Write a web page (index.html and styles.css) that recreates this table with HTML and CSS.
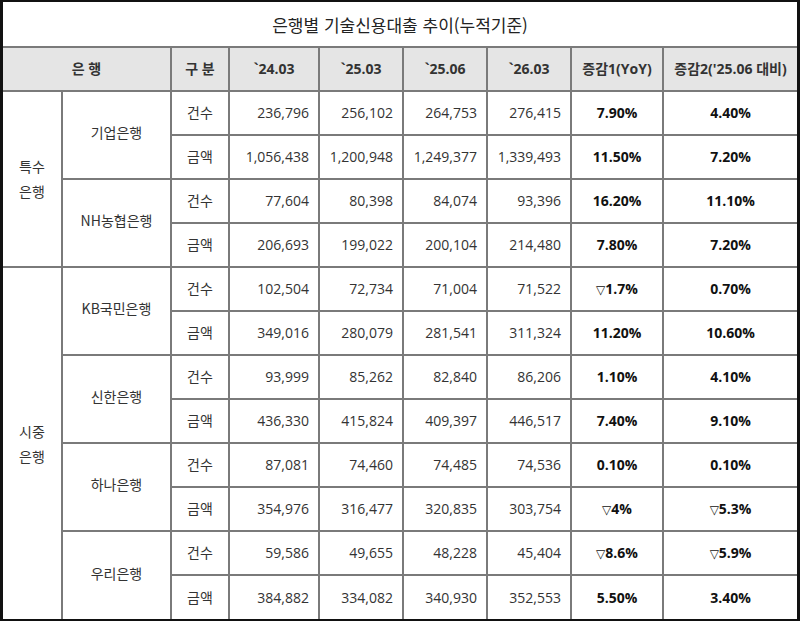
FILE: index.html
```html
<!DOCTYPE html>
<html lang="ko">
<head>
<meta charset="utf-8">
<link rel="stylesheet" href="styles.css">
</head>
<body>
<div class="frame">
<table class="grid">
  <colgroup>
    <col class="c-grp"><col class="c-bank"><col class="c-kind">
    <col class="c-n1"><col class="c-n2"><col class="c-n3"><col class="c-n4">
    <col class="c-p1"><col class="c-p2">
  </colgroup>
  <tr class="title-row"><td colspan="9" class="title">은행별 기술신용대출 추이(누적기준)</td></tr>
  <tr class="head-row">
    <th colspan="2">은 행</th><th>구 분</th><th>`24.03</th><th>`25.03</th><th>`25.06</th><th>`26.03</th><th>증감1(YoY)</th><th>증감2('25.06 대비)</th>
  </tr>
  <tr>
    <td rowspan="4" class="grp"><div class="grp-line">특수</div><div class="grp-line">은행</div></td>
    <td rowspan="2" class="bank">기업은행</td>
    <td class="kind">건수</td><td class="num">236,796</td><td class="num">256,102</td><td class="num">264,753</td><td class="num">276,415</td><td class="pct">7.90%</td><td class="pct">4.40%</td>
  </tr>
  <tr>
    <td class="kind">금액</td><td class="num">1,056,438</td><td class="num">1,200,948</td><td class="num">1,249,377</td><td class="num">1,339,493</td><td class="pct">11.50%</td><td class="pct">7.20%</td>
  </tr>
  <tr>
    <td rowspan="2" class="bank">NH농협은행</td>
    <td class="kind">건수</td><td class="num">77,604</td><td class="num">80,398</td><td class="num">84,074</td><td class="num">93,396</td><td class="pct">16.20%</td><td class="pct">11.10%</td>
  </tr>
  <tr>
    <td class="kind">금액</td><td class="num">206,693</td><td class="num">199,022</td><td class="num">200,104</td><td class="num">214,480</td><td class="pct">7.80%</td><td class="pct">7.20%</td>
  </tr>
  <tr>
    <td rowspan="8" class="grp"><div class="grp-line">시중</div><div class="grp-line">은행</div></td>
    <td rowspan="2" class="bank">KB국민은행</td>
    <td class="kind">건수</td><td class="num">102,504</td><td class="num">72,734</td><td class="num">71,004</td><td class="num">71,522</td><td class="pct"><span class="tri">▽</span>1.7%</td><td class="pct">0.70%</td>
  </tr>
  <tr>
    <td class="kind">금액</td><td class="num">349,016</td><td class="num">280,079</td><td class="num">281,541</td><td class="num">311,324</td><td class="pct">11.20%</td><td class="pct">10.60%</td>
  </tr>
  <tr>
    <td rowspan="2" class="bank">신한은행</td>
    <td class="kind">건수</td><td class="num">93,999</td><td class="num">85,262</td><td class="num">82,840</td><td class="num">86,206</td><td class="pct">1.10%</td><td class="pct">4.10%</td>
  </tr>
  <tr>
    <td class="kind">금액</td><td class="num">436,330</td><td class="num">415,824</td><td class="num">409,397</td><td class="num">446,517</td><td class="pct">7.40%</td><td class="pct">9.10%</td>
  </tr>
  <tr>
    <td rowspan="2" class="bank">하나은행</td>
    <td class="kind">건수</td><td class="num">87,081</td><td class="num">74,460</td><td class="num">74,485</td><td class="num">74,536</td><td class="pct">0.10%</td><td class="pct">0.10%</td>
  </tr>
  <tr>
    <td class="kind">금액</td><td class="num">354,976</td><td class="num">316,477</td><td class="num">320,835</td><td class="num">303,754</td><td class="pct"><span class="tri">▽</span>4%</td><td class="pct"><span class="tri">▽</span>5.3%</td>
  </tr>
  <tr>
    <td rowspan="2" class="bank">우리은행</td>
    <td class="kind">건수</td><td class="num">59,586</td><td class="num">49,655</td><td class="num">48,228</td><td class="num">45,404</td><td class="pct"><span class="tri">▽</span>8.6%</td><td class="pct"><span class="tri">▽</span>5.9%</td>
  </tr>
  <tr>
    <td class="kind">금액</td><td class="num">384,882</td><td class="num">334,082</td><td class="num">340,930</td><td class="num">352,553</td><td class="pct">5.50%</td><td class="pct">3.40%</td>
  </tr>
</table>
</div>
</body>
</html>
```
FILE: styles.css
```css
html, body {
  margin: 0;
  padding: 0;
  background: #fff;
}
.frame {
  box-sizing: border-box;
  width: 800px;
  height: 621px;
  border-style: solid;
  border-color: #111;
  border-width: 2px 3px 2px 3px;
  overflow: hidden;
}
.grid {
  width: 794px;
  height: 617px;
  border-collapse: collapse;
  table-layout: fixed;
  border-style: hidden;
  font-family: "Open Sans", "Noto Sans CJK KR", sans-serif;
  font-size: 14px;
  color: #333;
}
.c-grp { width: 59px; }
.c-bank { width: 109px; }
.c-kind { width: 58px; }
.c-n1 { width: 90px; }
.c-n2 { width: 84px; }
.c-n3 { width: 84px; }
.c-n4 { width: 84px; }
.c-p1 { width: 92px; }
.c-p2 { width: 134px; }
.grid td, .grid th {
  border: 2px solid #7a7a7a;
  padding: 0;
  line-height: 1.25;
}
.grid .title-row { height: 45px; }
.grid .title {
  text-align: center;
  font-family: "Noto Sans CJK KR", sans-serif;
  font-size: 17px;
  color: #222;
  padding-top: 2px;
}
.grid .head-row { height: 44px; }
.grid .head-row th {
  background: #e5e5e5;
  font-weight: 700;
  font-size: 14px;
  color: #333;
  text-align: center;
}
.grid tr { height: 44px; }
.grid .grp, .grid .bank, .grid .kind {
  text-align: center;
  font-family: "Noto Sans CJK KR", sans-serif;
  font-size: 14px;
}
.grp-line {
  height: 25px;
  line-height: 25px;
}
.grid .bank { padding-bottom: 4px; }
.grid .num {
  text-align: right;
  padding-right: 9px;
}
.grid .pct {
  text-align: center;
  font-weight: 700;
  font-size: 14px;
  color: #111;
}
.tri {
  font-family: "DejaVu Sans", sans-serif;
  font-weight: 400;
  font-size: 12px;
}
```
